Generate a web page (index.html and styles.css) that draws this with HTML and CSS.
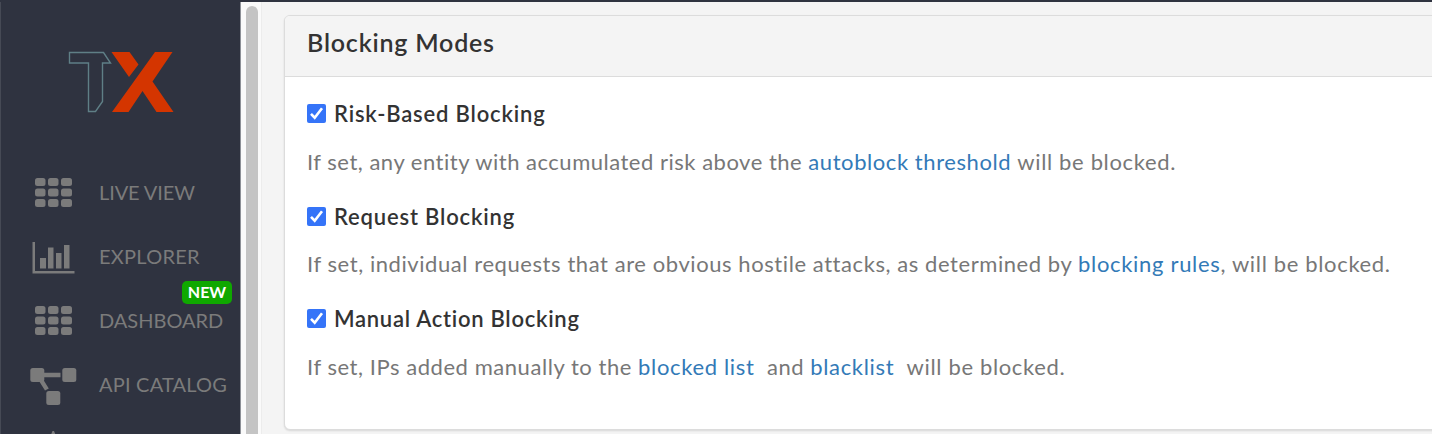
FILE: index.html
```html
<!DOCTYPE html>
<html lang="en">
<head>
<meta charset="utf-8">
<title>Blocking Modes</title>
<link rel="stylesheet" href="styles.css">
</head>
<body>
<div class="app">
  <nav class="sidebar">
    <svg class="logo" width="106" height="62" viewBox="0 0 106 62">
      <path d="M1.500 1.5H35.5L42.5 12H34.500V50.5L27.5 60.5H20.5V12H1.500Z" fill="none" stroke="#5f7f86" stroke-width="1.400"/>
      <path d="M43.5 1H61.5L70.5 13.5L61 26ZM87 1H104.500L84.500 30.500L105.500 61H88.500L74.500 40L60.500 61H44Z" fill="#d43500"/>
    </svg>
    <a class="item"><svg class="icon" width="48" height="40" viewBox="0 0 48 40"><g fill="#7b7b7b"><rect x="5" y="6" width="10.500" height="8" rx="2.500"/><rect x="18" y="6" width="10.500" height="8" rx="2.500"/><rect x="31" y="6" width="11" height="8" rx="2.500"/><rect x="5" y="16.500" width="10.500" height="8" rx="2.500"/><rect x="18" y="16.500" width="10.500" height="8" rx="2.500"/><rect x="31" y="16.500" width="11" height="8" rx="2.500"/><rect x="5" y="27" width="10.500" height="8" rx="2.500"/><rect x="18" y="27" width="10.500" height="8" rx="2.500"/><rect x="31" y="27" width="11" height="8" rx="2.500"/></g></svg><span class="live">LIVE VIEW</span></a>
    <a class="item"><svg class="icon" width="48" height="40" viewBox="0 0 48 40"><path fill="#7b7b7b" d="M2.500 6H5V35H44.500V37.500H2.500ZM10 22H16V32.500H10ZM18 11.500H23.500V32.500H18ZM26 17H31.500V32.500H26ZM34 9H39.500V32.500H34Z"/></svg><span class="explorer">EXPLORER</span></a>
    <a class="item"><svg class="icon" width="48" height="40" viewBox="0 0 48 40"><g fill="#7b7b7b"><rect x="5" y="6" width="10.500" height="8" rx="2.500"/><rect x="18" y="6" width="10.500" height="8" rx="2.500"/><rect x="31" y="6" width="11" height="8" rx="2.500"/><rect x="5" y="16.500" width="10.500" height="8" rx="2.500"/><rect x="18" y="16.500" width="10.500" height="8" rx="2.500"/><rect x="31" y="16.500" width="11" height="8" rx="2.500"/><rect x="5" y="27" width="10.500" height="8" rx="2.500"/><rect x="18" y="27" width="10.500" height="8" rx="2.500"/><rect x="31" y="27" width="11" height="8" rx="2.500"/></g></svg><span>DASHBOARD</span><span class="badge">NEW</span></a>
    <a class="item"><svg class="icon" width="48" height="40" viewBox="0 0 48 40"><g fill="#7b7b7b"><rect x="0.300" y="4" width="14" height="14" rx="2.500"/><rect x="32.300" y="4" width="14" height="14" rx="2.500"/><rect x="16.300" y="27" width="14" height="14" rx="2.500"/><path d="M14 8.800H30.500V13.200H14ZM9 17L13.500 16L18.800 24.500L15 26.500Z"/></g></svg><span class="catalog">API CATALOG</span></a>
    <svg class="next" width="48" height="20" viewBox="0 0 48 20"><path d="M22.500 0H24L28 10H18.500Z" fill="#7b7b7b"/></svg>
  </nav>
  <div class="gutter"><div class="thumb"></div></div>
  <main class="main">
    <section class="card">
      <h1 class="card-head">Blocking Modes</h1>
      <div class="card-body">
        <label class="option"><svg class="check" width="19" height="19" viewBox="0 0 19 19"><rect width="19" height="19" rx="2" fill="#3574f8"/><path d="M4 9.800L7.700 13.700L15 4.200" fill="none" stroke="#fff" stroke-width="2.600"/></svg><span>Risk-Based Blocking</span></label>
        <p class="desc risk">If set, any entity with accumulated risk above the <a>autoblock threshold</a> <span class="tail">will be blocked.</span></p>
        <label class="option"><svg class="check" width="19" height="19" viewBox="0 0 19 19"><rect width="19" height="19" rx="2" fill="#3574f8"/><path d="M4 9.800L7.700 13.700L15 4.200" fill="none" stroke="#fff" stroke-width="2.600"/></svg><span>Request Blocking</span></label>
        <p class="desc request">If set, individual requests that are obvious hostile attacks, as determined by <a>blocking rules</a><span class="tail">, will be blocked.</span></p>
        <label class="option manual-option"><svg class="check" width="19" height="19" viewBox="0 0 19 19"><rect width="19" height="19" rx="2" fill="#3574f8"/><path d="M4 9.800L7.700 13.700L15 4.200" fill="none" stroke="#fff" stroke-width="2.600"/></svg><span>Manual Action Blocking</span></label>
        <p class="desc manual">If set, IPs added manually to the <a>blocked list</a>&nbsp; and <a>blacklist</a>&nbsp; <span class="tail">will be blocked.</span></p>
      </div>
    </section>
  </main>
</div>
</body>
</html>
```
FILE: styles.css
```css
* { box-sizing: border-box; }
body { margin: 0; font-family: Lato, "Liberation Sans", sans-serif; background: #f4f4f4; overflow: hidden; }
.app { display: flex; height: 434px; border-top: 2px solid #2f3340; overflow: hidden; }
.sidebar { width: 241px; flex: none; display: flex; flex-direction: column; background: #2f3340; border-left: 1px solid #464a55; border-right: 1px solid #8d9097; }
.logo { flex: none; margin: 49px 0 0 67px; }
.logo + .item { margin-top: 47px; }
.item { position: relative; flex: none; display: flex; align-items: center; height: 64px; padding-left: 29px; gap: 21px; font-size: 20px; color: #7b7b7b; white-space: nowrap; }
.icon { flex: none; overflow: visible; }
.live { letter-spacing: -0.1px; }
.explorer { letter-spacing: 0.27px; }
.catalog { letter-spacing: 0.2px; }
.badge { position: absolute; left: 181px; top: -7px; width: 50px; height: 23px; border-radius: 5px; background: #0fa800; color: #fff; font-size: 16px; font-weight: 700; line-height: 21px; text-align: center; }
.next { flex: none; margin: 15px 0 0 29px; }
.gutter { width: 21px; flex: none; padding: 4px 4px 0 5px; background: #fafafa; border-right: 1px solid #ececec; }
.thumb { width: 12px; height: 440px; border-radius: 6px; background: #c4c4c4; }
.main { flex: 1; padding: 13px 0 0 22px; }
.card { width: 1180px; height: 415px; border: 1px solid #dcdcdc; border-radius: 6px; background: #fff; box-shadow: 0 1px 2px rgba(0,0,0,.12); overflow: hidden; }
.card-head { margin: 0; height: 61px; padding-left: 22px; border-bottom: 1px solid #dcdcdc; background: #f4f4f4; color: #333; font-size: 25px; font-weight: 600; line-height: 53px; letter-spacing: 0.8px; }
.card-body { padding: 12px 0 0 22px; white-space: nowrap; }
.option { display: flex; align-items: center; gap: 8px; height: 48px; font-size: 22px; font-weight: 600; letter-spacing: 0.82px; color: #333; }
.manual-option { letter-spacing: 0.72px; }
.desc { margin: 0; height: 55px; padding-top: 1px; font-size: 22px; line-height: 48px; color: #777; }
.desc a { color: #337ab7; }
.risk { letter-spacing: 0.51px; }
.risk a { letter-spacing: 0.57px; }
.request { height: 54px; padding-top: 0; letter-spacing: 0.57px; }
.request a { letter-spacing: 0.68px; }
.manual { letter-spacing: 0.55px; }
.manual a { letter-spacing: 0.66px; }
.tail { letter-spacing: 0.65px; }
```
